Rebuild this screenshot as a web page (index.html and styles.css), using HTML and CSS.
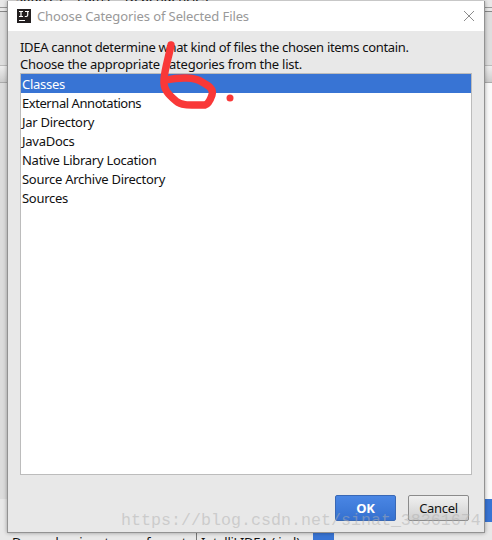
FILE: index.html
```
<!DOCTYPE html>
<html lang="en">
<head>
    <meta charset="UTF-8">
    <meta name="viewport" content="width=device-width, initial-scale=1.0">
    <title>Choose Categories of Selected Files</title>
    <link rel="stylesheet" href="styles.css">
</head>
<body>

<!-- settings window behind the dialog -->
<div class="backdrop">
    <div class="tabs"><span>Sources</span><span>Paths</span><span>Dependencies</span></div>
    <div class="toolbar"></div>
    <div class="table-head"></div>
    <div class="table-body"></div>
    <div class="table-selected"></div>
    <div class="storage">
        <span class="storage-label">Dependencies storage format:</span>
        <span class="storage-value">IntelliJ IDEA (.iml)</span>
        <span class="storage-arrow"></span>
    </div>
</div>

<div class="dialog">
    <div class="titlebar">
        <svg class="logo" width="14" height="14" viewBox="0 0 14 14">
            <rect width="14" height="14" fill="#231f20"/>
            <path d="M2 2.5h4M4 2.5v5M2 7.5h4M8 2.5h4M10.7 2.5v3.6q0 1.4-1.4 1.4h-1.5" fill="none" stroke="#fff" stroke-width="1.2"/>
            <path d="M2 11.5h6" stroke="#fff" stroke-width="1"/>
        </svg>
        <span class="title">Choose Categories of Selected Files</span>
        <svg class="close" width="12" height="12" viewBox="0 0 12 12">
            <path d="M1 1l10 10M11 1L1 11" fill="none" stroke="#8c8c8c" stroke-width="1"/>
        </svg>
    </div>
    <div class="content">
        <p class="message"><span class="line-one">IDEA cannot determine what kind of files the chosen items contain.</span><br><span class="line-two">Choose the appropriate categories from the list.</span></p>
        <ul class="list">
            <li class="selected">Classes</li>
            <li class="tight">External Annotations</li>
            <li>Jar Directory</li>
            <li>JavaDocs</li>
            <li>Native Library Location</li>
            <li>Source Archive Directory</li>
            <li>Sources</li>
        </ul>
        <div class="buttons">
            <button class="ok">OK</button>
            <button>Cancel</button>
        </div>
    </div>
</div>

<svg class="marker" width="90" height="85" viewBox="150 30 90 85">
    <path d="M171 45C169 56 165 68 164 79C163 90 169 95 176 101C182 106 190 105 205 105C208 104 210 101 212 95C214 89 209 86 202 82C195 77 180 77 166 80" fill="none" stroke="#f93838" stroke-width="7.4" stroke-linecap="round" stroke-linejoin="round"/>
    <circle cx="230" cy="98" r="3.5" fill="#f93838"/>
</svg>
<div class="watermark">https://blog.csdn.net/sinat_38361674</div>

</body>
</html>
```
FILE: styles.css
```
* {
    box-sizing: border-box;
}
body {
    margin: 0;
    width: 492px;
    height: 540px;
    overflow: hidden;
    position: relative;
    background-color: #e8e8e8;
    font-family: "Noto Sans", sans-serif;
    font-size: 13px;
    color: #111;
}
.backdrop {
    display: flex;
    flex-direction: column;
    height: 540px;
    overflow: hidden;
}
.backdrop > div {
    flex: none;
}
.tabs {
    display: flex;
    gap: 15px;
    height: 8px;
    padding-left: 16px;
    line-height: 18px;
    letter-spacing: -0.28px;
    border-bottom: 1px solid #999;
}
.tabs span {
    margin-top: -12px;
}
.toolbar {
    height: 54px;
    margin-top: 3px;
    border-top: 1px solid #888;
    background-color: #dedede;
}
.table-head {
    height: 18px;
    border-top: 1px solid #bbb;
    border-bottom: 1px solid #aaa;
    background: linear-gradient(#eee, #ccc);
}
.table-body {
    height: 416px;
    background: linear-gradient(to right, #dcdcdc 50%, #fafafa 50%);
}
.table-selected {
    height: 23px;
    margin-left: 7px;
    background-color: #3874d4;
}
.storage {
    display: flex;
    align-items: flex-start;
    height: 30px;
    margin-top: 10px;
    padding-left: 12px;
    letter-spacing: -0.28px;
}
.storage-label {
    width: 184px;
    line-height: 21px;
    white-space: nowrap;
}
.storage-value {
    width: 117px;
    padding-left: 4px;
    border-left: 1px solid #777;
    line-height: 21px;
    white-space: nowrap;
}
.storage-arrow {
    width: 21px;
    height: 20px;
    background-color: #3874d4;
}
.dialog {
    position: absolute;
    left: 7px;
    top: 1px;
    width: 478px;
    height: 532px;
    border: 1px solid #929292;
    border-top-width: 0;
    background-color: #e8e8e8;
    box-shadow: 0 0 4px rgba(0, 0, 0, 0.35);
}
.titlebar {
    display: flex;
    align-items: center;
    height: 30px;
    padding: 0 9px;
    background-color: #fff;
}
.title {
    flex: 1;
    margin-left: 6px;
    color: #999;
    letter-spacing: -0.1px;
}
.content {
    padding: 8px 12px 0;
}
.message {
    margin: 0;
    line-height: 17px;
    white-space: nowrap;
}
.line-one {
    letter-spacing: -0.31px;
}
.line-two {
    letter-spacing: -0.22px;
}
.list {
    height: 402px;
    margin: 0;
    padding: 0;
    list-style: none;
    border: 1px solid #bcbcbc;
    background-color: #fff;
}
.list li {
    height: 19px;
    padding: 1px 0 0 1px;
    line-height: 18px;
    letter-spacing: -0.27px;
}
.list .tight {
    letter-spacing: -0.44px;
}
.list .selected {
    background-color: #3874d4;
    color: #fff;
}
.buttons {
    display: flex;
    justify-content: flex-end;
    gap: 12px;
    margin: 20px 3px 0 0;
}
button {
    width: 61px;
    height: 26px;
    padding: 0;
    border: 1px solid #8b8b8b;
    border-radius: 2px;
    background: linear-gradient(#f0f0f0, #cfcfcf);
    font: 13px "Noto Sans", sans-serif;
    letter-spacing: -0.3px;
    color: #111;
}
.ok {
    border-color: #3968b5;
    background: linear-gradient(#4a86e4, #3571d0);
    color: #fff;
    font-weight: bold;
}
.marker {
    position: absolute;
    left: 150px;
    top: 30px;
}
.watermark {
    position: absolute;
    left: 121px;
    top: 511px;
    font-family: "Liberation Mono", monospace;
    font-size: 16.67px;
    line-height: 20px;
    color: rgba(175, 175, 175, 0.5);
}
```
